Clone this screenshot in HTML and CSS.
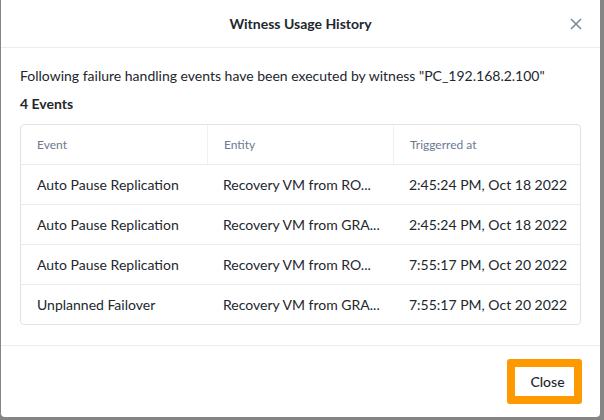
FILE: index.html
```html
<!DOCTYPE html>
<html>
<head>
<meta charset="utf-8">
<link rel="stylesheet" href="styles.css">
</head>
<body>
<div class="modal">
  <div class="header">
    <div class="title">Witness Usage History</div>
    <span class="close-x"><svg width="12" height="12" viewBox="0 0 12 12"><path d="M1.5 1.5 L10.5 10.5 M10.5 1.5 L1.5 10.5" stroke="#7d8a99" stroke-width="1.7" stroke-linecap="round"/></svg></span>
  </div>
  <div class="body">
    <p class="desc">Following failure handling events have been executed by witness "PC_192.168.2.100"</p>
    <div class="count">4 Events</div>
    <div class="table">
      <div class="row head">
        <div class="cell">Event</div>
        <div class="cell">Entity</div>
        <div class="cell">Triggerred at</div>
      </div>
      <div class="row">
        <div class="cell">Auto Pause Replication</div>
        <div class="cell">Recovery VM from RO...</div>
        <div class="cell">2:45:24 PM, Oct 18 2022</div>
      </div>
      <div class="row">
        <div class="cell">Auto Pause Replication</div>
        <div class="cell">Recovery VM from GRA...</div>
        <div class="cell">2:45:24 PM, Oct 18 2022</div>
      </div>
      <div class="row">
        <div class="cell">Auto Pause Replication</div>
        <div class="cell">Recovery VM from RO...</div>
        <div class="cell">7:55:17 PM, Oct 20 2022</div>
      </div>
      <div class="row">
        <div class="cell">Unplanned Failover</div>
        <div class="cell">Recovery VM from GRA...</div>
        <div class="cell">7:55:17 PM, Oct 20 2022</div>
      </div>
    </div>
  </div>
  <div class="footer">
    <button class="btn">Close</button>
  </div>
</div>
</body>
</html>
```

FILE: styles.css
```css
html, body {
  margin: 0;
  padding: 0;
  background: #858585;
  width: 604px;
  height: 420px;
  overflow: hidden;
  font-family: Lato, "Liberation Sans", sans-serif;
}
.modal {
  margin-left: 1px;
  width: 599px;
  height: 417px;
  background: #fff;
  border-radius: 0 0 4px 4px;
  display: flex;
  flex-direction: column;
}
.header {
  height: 48px;
  box-sizing: border-box;
  border-bottom: 1px solid #e9edf1;
  display: flex;
  align-items: center;
  justify-content: center;
  position: relative;
}
.title {
  font-size: 14px;
  font-weight: 700;
  color: #22272e;
}
.close-x {
  position: absolute;
  right: 18px;
  top: 18px;
  width: 12px;
  height: 12px;
  display: flex;
}
.body {
  padding: 18px 19px 20px 19px;
  border-bottom: 1px solid #e9edf1;
}
.desc {
  margin: 0;
  font-size: 14px;
  color: #22272e;
  line-height: 20px;
}
.count {
  margin-top: 8px;
  font-size: 14px;
  font-weight: 700;
  color: #22272e;
  line-height: 20px;
}
.table {
  margin-top: 10px;
  border: 1px solid #dfe3e8;
  border-radius: 4px;
}
.row {
  display: grid;
  grid-template-columns: 186px 186px 1fr;
  height: 40px;
  box-sizing: border-box;
  border-top: 1px solid #e9edf1;
}
.row.head {
  border-top: none;
  height: 39px;
}
.cell {
  display: flex;
  align-items: center;
  padding-left: 16px;
  font-size: 14px;
  color: #22272e;
  white-space: nowrap;
}
.head .cell {
  font-size: 12px;
  color: #6b7a8f;
}
.head .cell + .cell {
  border-left: 1px solid #eef1f4;
}
.footer {
  flex: 1;
  display: flex;
  align-items: center;
  justify-content: flex-end;
  padding-right: 18px;
}
.btn {
  width: 75px;
  height: 45px;
  border: 8px solid #ff9900;
  border-radius: 3px;
  background: #fff;
  font-family: inherit;
  font-size: 14px;
  font-weight: 500;
  color: #22272e;
  padding: 0 0 0 6px;
  box-sizing: border-box;
}
```
